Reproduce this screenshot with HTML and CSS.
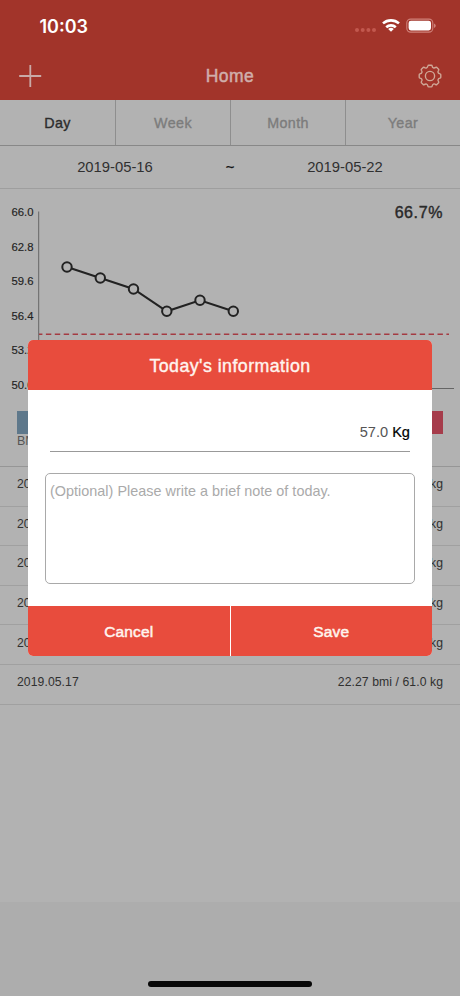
FILE: index.html
```html
<!DOCTYPE html>
<html lang="en">
<head>
<meta charset="utf-8">
<title>Home</title>
<link rel="stylesheet" href="styles.css">
</head>
<body>
<div class="screen">
  <header class="header">
    <div class="status">
      <span class="time">10:03</span>
      <svg class="status-icons" width="84" height="20" viewBox="0 0 84 20">
        <g fill="#c2584e"><circle cx="3" cy="14" r="2"/><circle cx="8.7" cy="14" r="2"/><circle cx="14.4" cy="14" r="2"/><circle cx="20" cy="14" r="2"/></g>
        <g fill="none" stroke="#fff" stroke-width="2.6"><path d="M29 7.4A12 12 0 0 1 45 7.4"/><path d="M32.2 11.2A7.2 7.2 0 0 1 41.8 11.2"/></g>
        <path fill="#fff" d="M37 15.8L34.2 13.1A4.2 4.2 0 0 1 39.8 13.1Z"/>
        <rect x="52.8" y="3.1" width="26" height="13" rx="3.8" fill="none" stroke="#cf8179" stroke-width="1.1"/>
        <rect x="54.6" y="4.8" width="22.4" height="9.6" rx="2.3" fill="#fff"/>
        <path fill="#cf8179" d="M80 7.6Q81.8 8.4 81.8 9.8T80 12Z"/>
      </svg>
    </div>
    <div class="nav">
      <svg width="24" height="24" viewBox="0 0 24 24"><path d="M12.3 1v22M1.2 12h22" stroke="#c9aaa7" stroke-width="1.8" fill="none"/></svg>
      <h1 class="title">Home</h1>
      <svg width="24" height="24" viewBox="-12 -12 24 24" fill="none" stroke="#d0a898" stroke-width="1.35" stroke-linejoin="round">
        <path d="M-1.3-10.8H1.3Q2-10.8 2.1-10.1Q2.3-8.5 3.4-8.1T5.7-8.6Q6.3-9 6.8-8.6L8.6-6.8Q9-6.3 8.6-5.7Q7.6-4.4 8.1-3.4T10.1-2.1Q10.8-2 10.8-1.3V1.3Q10.8 2 10.1 2.1Q8.5 2.3 8.1 3.4T8.6 5.7Q9 6.3 8.6 6.8L6.8 8.6Q6.3 9 5.7 8.6Q4.4 7.6 3.4 8.1T2.1 10.1Q2 10.8 1.3 10.8H-1.3Q-2 10.8-2.1 10.1Q-2.3 8.5-3.4 8.1T-5.7 8.6Q-6.3 9-6.8 8.6L-8.6 6.8Q-9 6.3-8.6 5.7Q-7.6 4.4-8.1 3.4T-10.1 2.1Q-10.8 2-10.8 1.3V-1.3Q-10.8-2-10.1-2.1Q-8.5-2.3-8.1-3.4T-8.6-5.7Q-9-6.3-8.6-6.8L-6.8-8.6Q-6.3-9-5.7-8.6Q-4.4-7.6-3.4-8.1T-2.1-10.1Q-2-10.8-1.3-10.8Z"/>
        <circle r="4.6"/>
      </svg>
    </div>
  </header>
  <nav class="tabs">
    <span class="tab active">Day</span><span class="tab">Week</span><span class="tab">Month</span><span class="tab">Year</span>
  </nav>
  <div class="range"><span>2019-05-16</span><span class="tilde">~</span><span>2019-05-22</span></div>
  <section class="summary">
    <svg class="chart" width="460" height="221" viewBox="0 190 460 221">
      <g class="axis-labels">
        <text x="11.5" y="216">66.0</text><text x="11.5" y="250.5">62.8</text><text x="11.5" y="285">59.6</text><text x="11.5" y="319.5">56.4</text><text x="11.5" y="354">53.2</text><text x="11.5" y="388.5">50.0</text>
      </g>
      <text class="percent" x="443" y="217.5" text-anchor="end">66.7%</text>
      <path d="M38.7 211.5V388.5H454" fill="none" stroke="#656565" stroke-width="1"/>
      <path d="M39 334.3H449" stroke="#a43b42" stroke-width="1.5" stroke-dasharray="5.4 3.5" stroke-dashoffset="2"/>
      <path d="M67 267L100.3 278L133.5 289L166.8 311.3L200 300.3L233.3 311.3" fill="none" stroke="#222" stroke-width="2.1"/>
      <g fill="#b2b2b2" stroke="#222" stroke-width="2"><circle cx="67" cy="267" r="4.7"/><circle cx="100.3" cy="278" r="4.7"/><circle cx="133.5" cy="289" r="4.7"/><circle cx="166.8" cy="311.3" r="4.7"/><circle cx="200" cy="300.3" r="4.7"/><circle cx="233.3" cy="311.3" r="4.7"/></g>
    </svg>
    <div class="scale"><i class="low"></i><i class="normal"></i><i class="high"></i></div>
    <div class="scale-label">BMI</div>
  </section>
  <ul class="list">
    <li><span>2019.05.22</span><span>20.81 bmi / 57.0 kg</span></li>
    <li><span>2019.05.21</span><span>21.18 bmi / 58.0 kg</span></li>
    <li><span>2019.05.20</span><span>20.81 bmi / 57.0 kg</span></li>
    <li><span>2019.05.19</span><span>21.54 bmi / 59.0 kg</span></li>
    <li><span>2019.05.18</span><span>21.91 bmi / 60.0 kg</span></li>
    <li><span>2019.05.17</span><span>22.27 bmi / 61.0 kg</span></li>
  </ul>
  <footer class="footer"><div class="home-bar"></div></footer>

  <div class="modal">
    <h2 class="modal-title">Today's information</h2>
    <div class="modal-body">
      <div class="weight"><span class="value">57.0</span><span class="unit">Kg</span></div>
      <div class="note">(Optional) Please write a brief note of today.</div>
    </div>
    <div class="actions"><span>Cancel</span><span>Save</span></div>
  </div>
</div>
</body>
</html>
```

FILE: styles.css
```css
* { box-sizing: border-box; margin: 0; padding: 0; }
body { font-family: "Liberation Sans", Arial, sans-serif; background: #adadad; }
svg { display: block; }
.screen { position: relative; width: 460px; height: 996px; overflow: hidden; display: flex; flex-direction: column; background: #b2b2b2; color: #303030; }

.header { height: 100px; background: #a2342a; }
.status { height: 52px; padding: 0 22px 0 39.5px; display: flex; justify-content: space-between; align-items: center; color: #fff; }
.time { font: 600 18px/22px Inter, sans-serif; padding-top: 1px; }
.status-icons { margin-top: -1px; }
.nav { height: 48px; padding: 0 18px; display: flex; justify-content: space-between; align-items: center; }
.title { font-size: 17.5px; font-weight: 400; letter-spacing: .5px; padding-top: 1px; color: #d0aeaa; -webkit-text-stroke: .5px #d0aeaa; }

.tabs { height: 46px; display: grid; grid-template-columns: repeat(4, 1fr); border-bottom: 1px solid #888; }
.tab { display: flex; align-items: center; justify-content: center; font-size: 14.3px; letter-spacing: .4px; color: #7c7c7c; -webkit-text-stroke: .35px currentColor; border-left: 1px solid #8e8e8e; padding-top: 1px; }
.tab:first-child { border-left: 0; }
.tab.active { color: #2c2c2c; }
.range { height: 43px; display: grid; grid-template-columns: 1fr 0 1fr; align-items: center; justify-items: center; font-size: 14.8px; border-bottom: 1px solid #9e9e9e; }
.tilde { color: #111; -webkit-text-stroke: .3px #111; }

.summary { height: 278px; padding-top: 1px; border-bottom: 1px solid #969696; }
.chart { font-family: "Liberation Sans", Arial, sans-serif; }
.axis-labels { font-size: 11.3px; fill: #222; stroke: #222; stroke-width: .15px; }
.percent { font-size: 16px; letter-spacing: .6px; fill: #292929; stroke: #292929; stroke-width: .4px; }
.scale { height: 23px; margin: 0 17px; display: grid; grid-template-columns: 1fr 2fr 1fr; }
.low { background: #5e788b; }
.normal { background: #5d8c6b; }
.high { background: #a63c4b; }
.scale-label { margin-left: 17px; font-size: 12.5px; line-height: 15px; color: #555; }

.list { list-style: none; height: 435px; }
.list li { height: 39.6px; padding: 0 17px 4px; display: flex; justify-content: space-between; align-items: center; font-size: 12.2px; letter-spacing: .08px; border-bottom: 1px solid #a0a0a0; }
.footer { flex: 1; background: #adadad; display: flex; align-items: flex-end; justify-content: center; padding-bottom: 9px; }
.home-bar { width: 164px; height: 6px; border-radius: 3px; background: #080808; }

.modal { position: absolute; left: 28px; top: 340px; width: 404px; height: 316.4px; border-radius: 5px; overflow: hidden; background: #fff; display: flex; flex-direction: column; }
.modal-title { height: 50px; display: flex; align-items: center; justify-content: center; background: #e84c3d; color: #fff4ee; font-size: 17.8px; font-weight: 400; letter-spacing: .45px; -webkit-text-stroke: .4px #fff4ee; padding-top: 2px; }
.modal-body { flex: 1; padding: 0 17px; }
.weight { height: 62px; margin: 0 5px; display: flex; justify-content: flex-end; align-items: flex-end; gap: 4px; padding-bottom: 10px; border-bottom: 1px solid #999; font-size: 14.6px; line-height: 17px; color: #000; }
.value { color: #555; }
.unit { -webkit-text-stroke: .2px #000; }
.note { height: 111px; margin-top: 21px; border: 1px solid #a9a9a9; border-radius: 5px; padding: 9px 4px; font-size: 14.4px; line-height: 17px; letter-spacing: .02px; color: #aaa; }
.actions { height: 50px; display: grid; grid-template-columns: 201.5px 1fr; gap: 1px; }
.actions span { display: flex; align-items: center; justify-content: center; background: #e84c3d; color: #fff4ee; font-size: 15.5px; letter-spacing: .15px; -webkit-text-stroke: .5px #fff4ee; padding-top: 2px; }
```
